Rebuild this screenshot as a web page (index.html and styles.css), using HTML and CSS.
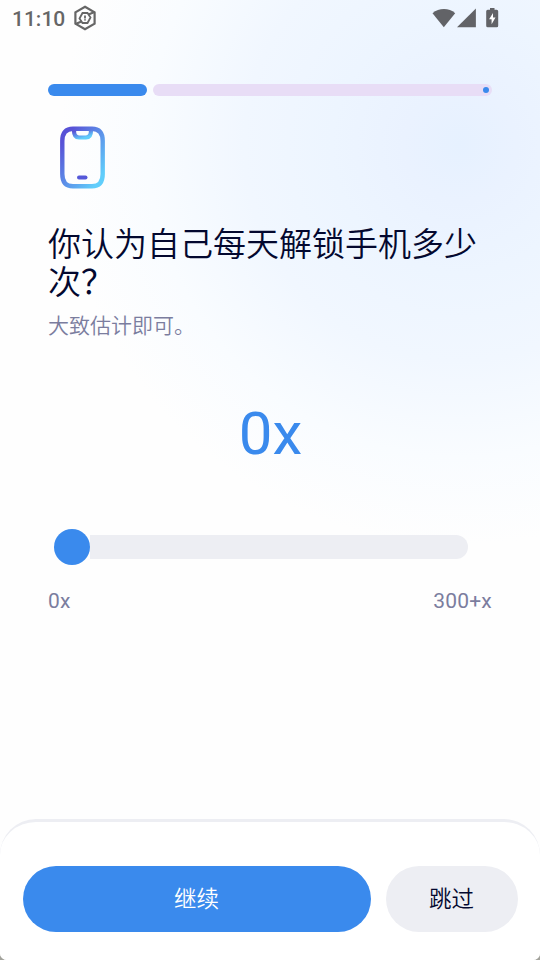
FILE: index.html
```html
<!DOCTYPE html>
<html lang="zh-CN">
<head>
<meta charset="utf-8">
<title>解锁次数</title>
<link rel="stylesheet" href="styles.css">
</head>
<body>
<div class="screen">
  <header class="status">
    <span class="clock">11:10</span>
    <svg class="hex" width="24" height="26" viewBox="0 0 24 26" fill="none" stroke="#666" stroke-width="2.2">
      <path d="M12 1.800 21.600 7.300V18.700L12 24.200 2.400 18.700V7.300Z"/>
      <path d="M9.500 8H14.500L17.500 12.500 14.500 18H9.500L6.500 13.500Z" stroke-width="1.800"/>
      <path d="M15.500 9.500 21.500 7M2.500 19 8.500 16.500" stroke-width="1.900"/>
      <path d="M12 10.500V13.500M12 14.300V15.500" stroke-width="1.800"/>
    </svg>
    <svg class="signals" width="68" height="22" viewBox="0 0 68 22" fill="#626367">
      <path d="M.5 5.200C7-.3 17-.3 23.200 5.200L11.800 19.200Z"/>
      <path d="M43.900.6V19.200H25Z"/>
      <path d="M58 0h4.500v1.700h2.200q1.500 0 1.500 1.500v14.500q0 1.500-1.500 1.500h-9q-1.500 0-1.500-1.500V3.200q0-1.500 1.500-1.500H58Z"/>
      <path d="M61 5v4.500h2.500L59.600 16.200v-4.900h-2.500Z" fill="#fff"/>
    </svg>
  </header>
  <main class="content">
    <div class="progress"><div class="done"></div><div class="rest"><i class="stop"></i></div></div>
    <svg class="phone" width="46" height="64" viewBox="0 0 46 64" fill="none">
      <defs>
        <linearGradient id="body" x1="0" y1="0" x2="1" y2="1"><stop offset=".12" stop-color="#5852d6"/><stop offset=".9" stop-color="#61cefb"/></linearGradient>
        <linearGradient id="notch" x1="0" y1="0" x2=".65" y2="1"><stop offset=".1" stop-color="#5852d6"/><stop offset="1" stop-color="#61cefb"/></linearGradient>
      </defs>
      <path d="M13 2.700H32Q42.700 2.700 42.700 15V48Q42.700 60.300 32 60.300H13Q2.300 60.300 2.300 48V15Q2.300 2.700 13 2.700Z" stroke="url(#body)" stroke-width="4.400"/>
      <path d="M14 4.500Q14 11.500 19 11.500H26Q31 11.500 31 4.500" stroke="url(#notch)" stroke-width="4.200"/>
      <path d="M19 51.400H25.500" stroke="#5558d8" stroke-width="4" stroke-linecap="round"/>
    </svg>
    <h1>你认为自己每天解锁手机多少次<span class="mark">？</span></h1>
    <p class="hint">大致估计即可。</p>
    <div class="value">0x</div>
    <div class="slider"><div class="knob"></div><div class="track"></div></div>
    <div class="range"><span>0x</span><span>300+x</span></div>
  </main>
  <footer class="sheet">
    <button class="next">继续</button>
    <button class="skip">跳过</button>
  </footer>
</div>
</body>
</html>
```
FILE: styles.css
```css
* { box-sizing: border-box; }
body { margin: 0; background: #a3a39c; font-family: Roboto, "Noto Sans CJK SC", sans-serif; }
.screen {
  width: 540px; height: 960px; overflow: hidden;
  display: flex; flex-direction: column;
  border-radius: 0 0 7px 7px;
  background: radial-gradient(circle 400px at 460px 145px, #e6f1ff 0, #eaf2ff 14%, #edf5ff 32%, #f1f7ff 54%, #f9fcff 78%, #fefefe 100%);
}
.status { height: 36px; padding: 0 40px 0 12px; display: flex; align-items: center; flex: none; }
.clock { font-size: 21px; font-weight: 500; color: #666; padding-top: 2px; }
.hex { margin-left: 8px; }
.signals { margin-left: auto; margin-top: 1px; }
.content { flex: 1; padding: 48px 48px 0; display: flex; flex-direction: column; }
.progress { display: flex; gap: 6px; height: 12px; }
.done { width: 98.500px; border-radius: 6px; background: #3a8aed; }
.rest { flex: 1; border-radius: 6px; background: #e8ddf6; display: flex; align-items: center; justify-content: flex-end; padding-right: 3px; }
.stop { width: 6px; height: 6px; border-radius: 50%; background: #3a8aed; }
.phone { margin: 30px 0 0 12px; }
h1 { margin: 36px 0 0; font-size: 33px; font-weight: 350; line-height: 38px; color: #03082f; }
.mark { font-weight: 400; }
.hint { margin: 9px 0 0; font-size: 21px; font-weight: 350; line-height: 30px; color: #7b7d9e; }
.value { margin-top: 58px; padding-left: 1px; text-align: center; font-size: 60px; line-height: 70px; color: #3a8aed; }
.slider { display: flex; align-items: center; margin: 59.500px 24px 0 6px; height: 36px; }
.knob { width: 36px; height: 36px; border-radius: 50%; background: #3a8aed; }
.track { flex: 1; height: 24px; background: #edeef3; border-radius: 0 12px 12px 0; }
.range { display: flex; justify-content: space-between; margin-top: 24.500px; font-size: 21px; line-height: 25px; color: #7b7d9e; letter-spacing: .2px; }
.sheet { height: 141px; flex: none; border-top: 3px solid #edeef3; border-radius: 36px 36px 0 0; background: #fff; padding: 43.500px 22.500px 0; display: flex; gap: 15px; }
button { border: 0; border-radius: 33px; height: 66px; padding: 0 0 3px; font: 350 22.500px Roboto, "Noto Sans CJK SC", sans-serif; }
.next { flex: 1; background: #3a8aed; color: #fff; }
.skip { width: 132px; background: #edeef3; color: #03082f; }
```
